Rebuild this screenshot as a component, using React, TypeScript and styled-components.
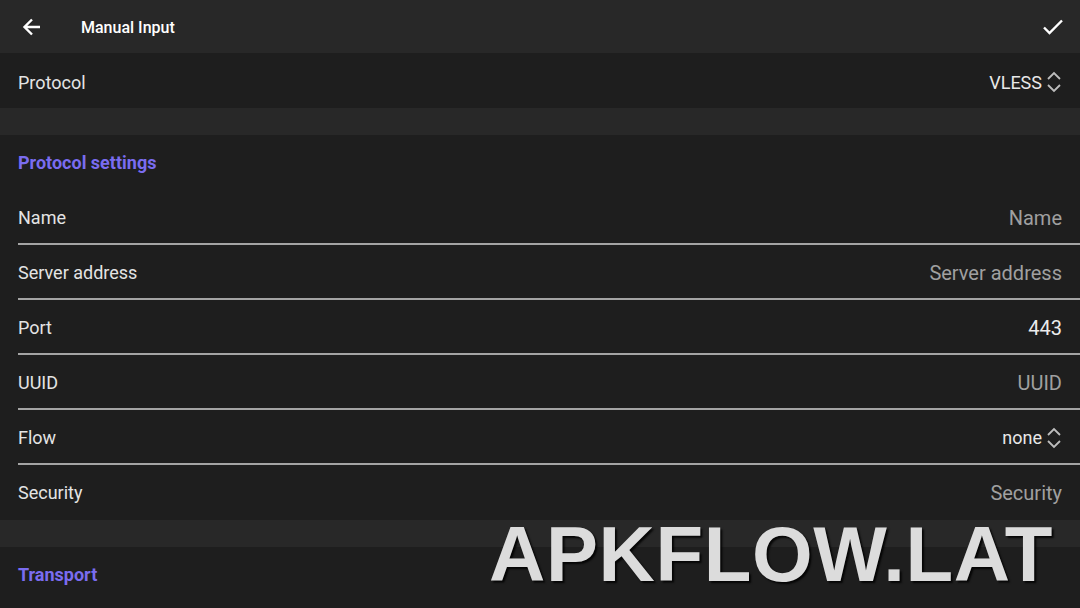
import styled, { createGlobalStyle } from 'styled-components';

const GlobalStyle = createGlobalStyle`
  html, body {
    margin: 0;
    padding: 0;
    background: #1e1e1e;
    font-family: Roboto, "Noto Sans", sans-serif;
    overflow: hidden;
  }
`;

type Field = { label: string; value: string; placeholder?: boolean; select?: boolean };

const protocolFields: Field[] = [
  { label: 'Name', value: 'Name', placeholder: true },
  { label: 'Server address', value: 'Server address', placeholder: true },
  { label: 'Port', value: '443' },
  { label: 'UUID', value: 'UUID', placeholder: true },
  { label: 'Flow', value: 'none', select: true },
  { label: 'Security', value: 'Security', placeholder: true },
];

function BackIcon() {
  return (
    <svg width="20" height="20" viewBox="0 0 20 20" fill="none">
      <path d="M18 10H3M10 2.5L2.5 10L10 17.5" stroke="#fff" strokeWidth="2.4" strokeLinecap="butt" />
    </svg>
  );
}

function CheckIcon() {
  return (
    <svg width="22" height="18" viewBox="0 0 22 18" fill="none">
      <path d="M2 9.5L7.5 15L20 2.5" stroke="#fff" strokeWidth="2.4" />
    </svg>
  );
}

function UpDownIcon() {
  return (
    <svg width="16" height="22" viewBox="0 0 16 22" fill="none">
      <path d="M2 8L8 2L14 8M2 14L8 20L14 14" stroke="#bdbdbd" strokeWidth="1.8" />
    </svg>
  );
}

function FieldRow(props: { field: Field; last?: boolean }) {
  const { field } = props;
  return (
    <RowStyle $divider={!props.last}>
      <RowLabel>{field.label}</RowLabel>
      {field.select ? (
        <SelectValue>
          {field.value}
          <UpDownIcon />
        </SelectValue>
      ) : (
        <InputValue $placeholder={field.placeholder}>{field.value}</InputValue>
      )}
    </RowStyle>
  );
}

export default function App() {
  return (
    <Screen>
      <GlobalStyle />
      <Toolbar>
        <IconButton>
          <BackIcon />
        </IconButton>
        <ToolbarTitle>Manual Input</ToolbarTitle>
        <ToolbarAction>
          <CheckIcon />
        </ToolbarAction>
      </Toolbar>

      <ProtocolRow>
        <RowLabel>Protocol</RowLabel>
        <SelectValue>
          VLESS
          <UpDownIcon />
        </SelectValue>
      </ProtocolRow>

      <Spacer />

      <SectionHeader>Protocol settings</SectionHeader>
      {protocolFields.map((field, index) => (
        <FieldRow key={field.label} field={field} last={index === protocolFields.length - 1} />
      ))}

      <Spacer />

      <SectionHeader>Transport</SectionHeader>

      <Watermark>APKFLOW.LAT</Watermark>
    </Screen>
  );
}

const Screen = styled.div`
  position: relative;
  width: 1080px;
  height: 608px;
  background: #1e1e1e;
  overflow: hidden;
`;

const Toolbar = styled.div`
  height: 53px;
  background: #282828;
  display: flex;
  align-items: center;
  padding: 0 16px 0 22px;
`;

const IconButton = styled.div`
  width: 20px;
  height: 20px;
  display: flex;
`;

const ToolbarTitle = styled.div`
  margin-left: 39px;
  color: #fff;
  font-size: 16px;
  font-weight: 500;
  flex: 1;
  margin-top: 1px;
`;

const ToolbarAction = styled.div`
  display: flex;
`;

const RowStyle = styled.div<{ $divider?: boolean }>`
  height: 55px;
  display: flex;
  align-items: center;
  justify-content: space-between;
  padding: 0 18px;
  box-sizing: border-box;
  position: relative;
  ${(p) =>
    p.$divider &&
    `
    &::after {
      content: '';
      position: absolute;
      left: 18px;
      right: 0;
      bottom: 0;
      height: 2px;
      background: #a4a4a4;
    }
  `}
`;

const ProtocolRow = styled(RowStyle)`
  padding-top: 3px;
`;

const RowLabel = styled.div`
  color: #e4e4e4;
  font-size: 18px;
`;

const SelectValue = styled.div`
  display: flex;
  align-items: center;
  gap: 4px;
  color: #e8e8e8;
  font-size: 18px;
`;

const InputValue = styled.div<{ $placeholder?: boolean }>`
  color: ${(p) => (p.$placeholder ? '#a0a0a0' : '#ececec')};
  font-size: 20px;
`;

const Spacer = styled.div`
  height: 27px;
  background: #282828;
`;

const SectionHeader = styled.div`
  height: 55px;
  display: flex;
  align-items: center;
  padding: 0 18px;
  color: #7a6cf0;
  font-size: 18px;
  font-weight: 700;
`;

const Watermark = styled.div`
  position: absolute;
  left: 489px;
  top: 509px;
  color: #dcdcdc;
  font-family: "Liberation Sans", Arial, sans-serif;
  font-size: 78px;
  font-weight: 700;
  letter-spacing: 0.6px;
  text-shadow: 2px 2px 2px rgba(0, 0, 0, 0.85);
`;
